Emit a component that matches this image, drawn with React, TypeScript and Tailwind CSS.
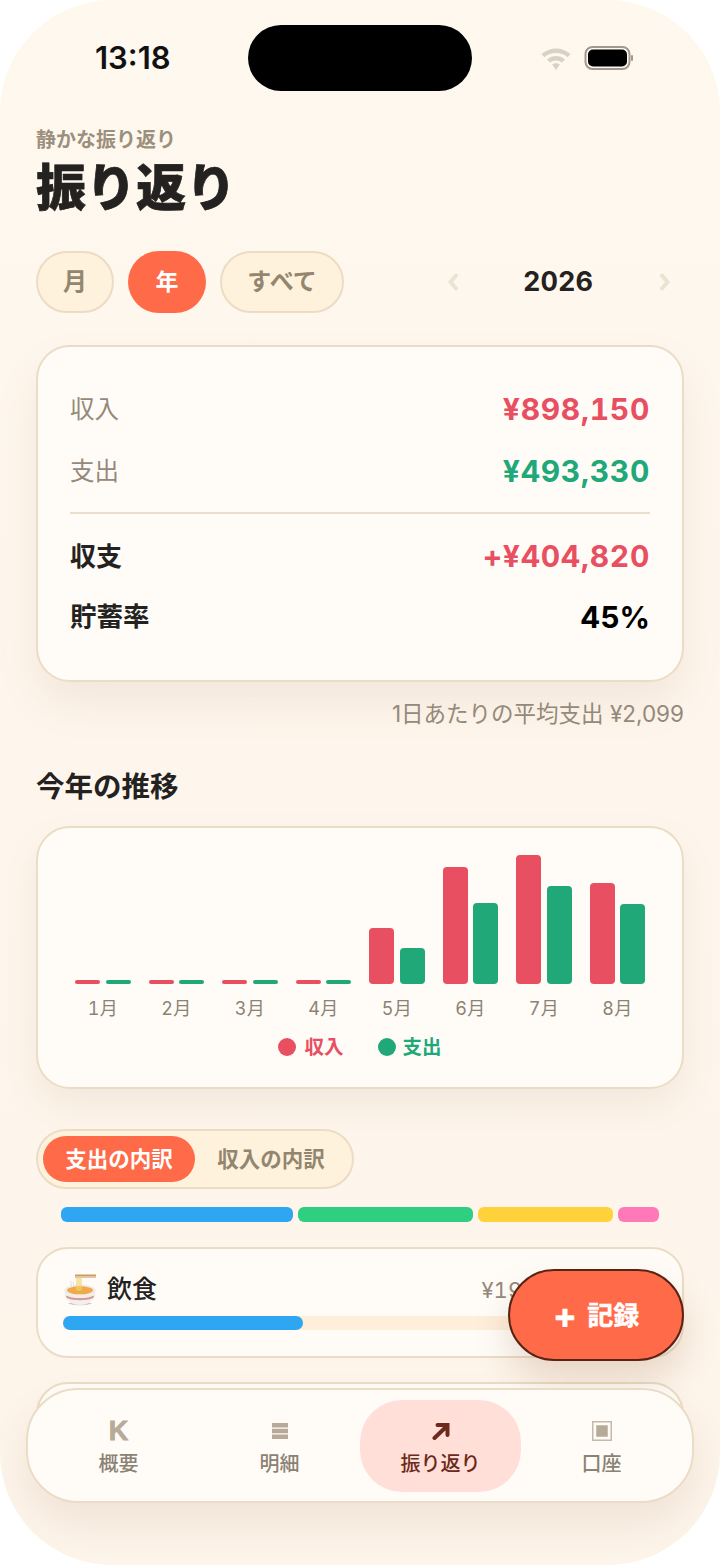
const months = [
  { label: '1月', income: 4, expense: 4 },
  { label: '2月', income: 4, expense: 4 },
  { label: '3月', income: 4, expense: 4 },
  { label: '4月', income: 4, expense: 4 },
  { label: '5月', income: 56, expense: 36 },
  { label: '6月', income: 117, expense: 81 },
  { label: '7月', income: 129, expense: 98 },
  { label: '8月', income: 101, expense: 80 },
];

function StatusBar() {
  return (
    <div className="relative h-[128px] shrink-0">
      <div className="absolute left-[95px] top-[41px] text-[31px] leading-[34px] font-semibold text-[#111111]">13:18</div>
      <div className="absolute left-[248px] top-[25px] w-[224px] h-[66px] rounded-[33px] bg-black" />
      <svg className="absolute left-[540px] top-[45px]" width="32" height="26" viewBox="0 0 32 26">
        <path d="M1.5 9C10 1.5 22 1.5 30.5 9l-2.8 3.2C21 6.6 11 6.6 4.3 12.2z" fill="#d8d1c4" />
        <path d="M7 14.4c5.2-4.6 12.8-4.6 18 0l-3 3.2c-3.4-2.9-8.6-2.9-12 0z" fill="#d8d1c4" />
        <path d="M12.2 19.6c2.2-1.8 5.4-1.8 7.6 0L16 25z" fill="#d8d1c4" />
      </svg>
      <svg className="absolute left-[584px] top-[45px]" width="50" height="26" viewBox="0 0 50 26">
        <rect x="1.5" y="2" width="44" height="22" rx="7" fill="none" stroke="#a09a8e" strokeWidth="2" />
        <rect x="4" y="4.5" width="39" height="17" rx="5" fill="#000000" />
        <rect x="47" y="10" width="2" height="6" rx="1" fill="#a09a8e" />
      </svg>
    </div>
  );
}

function Header() {
  return (
    <div className="px-9">
      <div className="text-[20px] leading-[24px] font-bold text-[#9c8f7c]">静かな振り返り</div>
      <div className="mt-[4px] text-[50px] leading-[64px] font-black text-[#242220] [-webkit-text-stroke:0.7px_#242220]">振り返り</div>
    </div>
  );
}

function PeriodRow() {
  return (
    <div className="mt-[31px] px-9 flex items-center justify-between">
      <div className="flex gap-[14px]">
        <div className="w-[78px] h-[62px] rounded-[31px] border-2 border-[#ecdcc4] bg-[#fef2dd] flex items-center justify-center text-[24px] font-bold text-[#93866f]">月</div>
        <div className="w-[78px] h-[62px] rounded-[31px] bg-[#ff6a48] flex items-center justify-center text-[23px] font-bold text-white">年</div>
        <div className="w-[124px] h-[62px] rounded-[31px] border-2 border-[#ecdcc4] bg-[#fef2dd] flex items-center justify-center text-[24px] font-bold text-[#93866f]">すべて</div>
      </div>
      <div className="flex items-center w-[250px] justify-between pl-[12px] pr-[12px]">
        <Chevron dir="left" />
        <div className="text-[27px] font-bold text-[#242220] tabular-nums mr-[2px]">2026</div>
        <Chevron dir="right" />
      </div>
    </div>
  );
}

function Chevron({ dir }: { dir: 'left' | 'right' }) {
  return (
    <svg width="14" height="20" viewBox="0 0 14 20">
      <path
        d={dir === 'left' ? 'M10 3.5L4.5 10l5.5 6.5' : 'M4 3.5L9.5 10 4 16.5'}
        fill="none"
        stroke="#ebe3d1"
        strokeWidth="4"
        strokeLinecap="round"
      />
    </svg>
  );
}

function SummaryCard() {
  return (
    <div className="mx-9 mt-[32px] h-[337px] rounded-[34px] border-2 border-[#ebdcc6] bg-[#fffcf8] shadow-[0_22px_44px_rgba(130,80,40,0.09)] px-[32px] pt-[31px]">
      <div className="flex items-center justify-between h-[62px]">
        <span className="text-[24.5px] text-[#94897a]">収入</span>
        <span className="text-[30px] font-bold text-[#e84f61] tabular-nums tracking-[0.7px]">¥898,150</span>
      </div>
      <div className="flex items-center justify-between h-[62px]">
        <span className="text-[24.5px] text-[#94897a]">支出</span>
        <span className="text-[30px] font-bold text-[#20a878] tabular-nums tracking-[0.7px]">¥493,330</span>
      </div>
      <div className="mt-[10px] h-[2px] bg-[#eadfcd]" />
      <div className="mt-[11px] flex items-center justify-between h-[62px]">
        <span className="text-[26px] font-bold text-[#242220]">収支</span>
        <span className="text-[30px] font-bold text-[#e84f61] tabular-nums tracking-[0.7px]">+¥404,820</span>
      </div>
      <div className="flex items-center justify-between h-[60px]">
        <span className="text-[26.5px] font-bold text-[#242220]">貯蓄率</span>
        <span className="text-[30px] font-bold text-black">45%</span>
      </div>
    </div>
  );
}

function TrendCard() {
  return (
    <div className="mx-9 mt-[18px] h-[263px] rounded-[34px] border-2 border-[#ebdcc6] bg-[#fffcf8] shadow-[0_16px_36px_rgba(130,80,40,0.08)] pt-[26px]">
      <div className="flex h-[130px] items-end pl-[37px]">
        {months.map((m) => (
          <div key={m.label} className="w-[73.5px] shrink-0 flex items-end gap-[5.5px]">
            <div className="w-[25px] rounded-[4px] bg-[#e84f61]" style={{ height: m.income }} />
            <div className="w-[25px] rounded-[4px] bg-[#20a878]" style={{ height: m.expense }} />
          </div>
        ))}
      </div>
      <div className="flex pl-[37px] mt-[13px]">
        {months.map((m) => (
          <div key={m.label} className="w-[73.5px] shrink-0 pr-[17.5px] text-center text-[18px] leading-[24px] text-[#8c8274] tabular-nums tracking-[0.3px]">{m.label}</div>
        ))}
      </div>
      <div className="mt-[14px] flex justify-center gap-[34px]">
        <div className="flex items-center gap-[8px]">
          <div className="w-[18px] h-[18px] rounded-full bg-[#e84f61]" />
          <span className="text-[19.5px] leading-[24px] font-bold text-[#e84f61]">収入</span>
        </div>
        <div className="flex items-center gap-[7px]">
          <div className="w-[18px] h-[18px] rounded-full bg-[#20a878]" />
          <span className="text-[19.5px] leading-[24px] font-bold text-[#20a878]">支出</span>
        </div>
      </div>
    </div>
  );
}

function Breakdown() {
  return (
    <>
      <div className="ml-9 mt-[40px] w-[318px] h-[60px] rounded-[30px] border-2 border-[#ecdcc4] bg-[#fef2dd] flex items-center pl-[5px]">
        <div className="w-[152px] h-[46px] rounded-[23px] bg-[#ff6a48] flex items-center justify-center text-[21.5px] font-bold text-white">支出の内訳</div>
        <div className="w-[152px] flex items-center justify-center text-[21.5px] font-bold text-[#93866f]">収入の内訳</div>
      </div>
      <div className="mx-[61px] mt-[18px] flex gap-[5px] h-[15px]">
        <div className="w-[232px] rounded-[6px] bg-[#2fa6f2]" />
        <div className="w-[175px] rounded-[6px] bg-[#2ecf80]" />
        <div className="w-[135px] rounded-[6px] bg-[#ffd23c]" />
        <div className="w-[41px] rounded-[6px] bg-[#ff78b8]" />
      </div>
      <div className="mx-9 mt-[25px] h-[111px] rounded-[32px] border-2 border-[#ebdcc6] bg-[#fffcf8] px-[25px] pt-[20px]">
        <div className="flex items-center justify-between h-[42px]">
          <div className="flex items-center gap-[10px]">
            <RamenIcon />
            <span className="text-[25px] font-medium text-[#242220]">飲食</span>
          </div>
          <span className="text-[22px] text-[#94897a] mr-[2px] tabular-nums">¥199,330 / 40%</span>
        </div>
        <div className="mt-[5px] h-[14px] rounded-[5px] bg-[#feeeda] overflow-hidden">
          <div className="w-[240px] h-full rounded-[7px] bg-[#2fa6f2]" />
        </div>
      </div>
      <div className="mx-9 mt-[24px] h-[110px] rounded-[32px] border-2 border-[#ebdcc6] bg-[#fffcf8]" />
    </>
  );
}

function RamenIcon() {
  return (
    <svg width="34" height="34" viewBox="0 0 34 34">
      <path d="M5 30c3 3 21 3 24 0z" fill="#c9c6c2" />
      <path d="M1.5 17h31c0 9-6 15-15.5 15S1.5 26 1.5 17z" fill="#f2eeea" />
      <path d="M2.6 22.5c7 3.4 21.8 3.4 28.8 0l-1 2.6c-7 3-19.8 3-26.8 0z" fill="#d99a9a" />
      <ellipse cx="17" cy="17" rx="15.5" ry="5.4" fill="#f1ece6" />
      <ellipse cx="17" cy="17.3" rx="13" ry="4" fill="#f0a94b" />
      <rect x="12" y="1.5" width="21" height="2" fill="#c99a6a" />
      <rect x="12" y="3.5" width="21" height="1.4" fill="#e2c096" />
      <path d="M14 5v12.5M16 5v13M18 5v12.5" stroke="#f3d56c" strokeWidth="1.2" />
      <path d="M8 8c-1 2 1 3 0 5M10.5 9c-1 2 1 3 0 5" stroke="#dfdcd6" strokeWidth="1" fill="none" />
    </svg>
  );
}

function TabBar() {
  return (
    <div className="absolute left-[26px] top-[1388px] w-[668px] h-[115px] rounded-[52px] border-2 border-[#ebdcc6] bg-[#fffcf8] shadow-[0_20px_40px_rgba(130,80,40,0.1)] grid grid-cols-4 items-center px-[10px]">
      <TabItem label="概要" icon={<span className="font-['Liberation_Sans',sans-serif] text-[27px] leading-[28px] font-bold text-[#b7aa99] [-webkit-text-stroke:0.8px_#b7aa99]">K</span>} />
      <TabItem
        label="明細"
        icon={
          <svg width="16" height="16" viewBox="0 0 16 16">
            <rect width="16" height="4.5" fill="#b7aa99" />
            <rect y="5.75" width="16" height="4.5" fill="#b7aa99" />
            <rect y="11.5" width="16" height="4.5" fill="#b7aa99" />
          </svg>
        }
      />
      <TabItem
        active
        label="振り返り"
        icon={
          <svg width="18" height="18" viewBox="0 0 18 18">
            <path d="M2.5 16L14.5 4.5M5.5 3H15.5V13" fill="none" stroke="#6b2a1c" strokeWidth="4" strokeLinecap="round" />
          </svg>
        }
      />
      <TabItem
        label="口座"
        icon={
          <svg width="20" height="20" viewBox="0 0 20 20">
            <rect x="0.75" y="0.75" width="18.5" height="18.5" fill="none" stroke="#c4b9a9" strokeWidth="1.5" />
            <rect x="4.25" y="4.25" width="11.5" height="11.5" fill="#b7aa99" />
          </svg>
        }
      />
    </div>
  );
}

function TabItem({ label, icon, active }: { label: string; icon: React.ReactNode; active?: boolean }) {
  return (
    <div
      className={`h-[92px] rounded-[42px] flex flex-col items-center pt-[17px] ${active ? 'bg-[#ffdfd7]' : ''}`}
    >
      <div className="h-[28px] flex items-center justify-center">{icon}</div>
      <div className={`mt-[5px] text-[20px] leading-[28px] font-medium ${active ? 'text-[#6b2a1c]' : 'text-[#8c8274]'}`}>{label}</div>
    </div>
  );
}

export default function App() {
  return (
    <div className="w-[720px] h-[1565px] bg-white font-['Inter','Noto_Sans_CJK_JP',sans-serif]">
      <div className="relative w-full h-full rounded-[112px] overflow-hidden bg-gradient-to-b from-[#fff8ef] to-[#fdf4ea] flex flex-col">
        <StatusBar />
        <Header />
        <PeriodRow />
        <SummaryCard />
        <div className="mx-9 mt-[16px] text-right text-[22.5px] leading-[32px] text-[#94897a]">1日あたりの平均支出 ¥2,099</div>
        <div className="ml-9 mt-[36px] text-[28.5px] leading-[42px] font-semibold text-[#242220]">今年の推移</div>
        <TrendCard />
        <Breakdown />
        <div className="absolute left-[508px] top-[1269px] w-[176px] h-[92px] rounded-[46px] border-2 border-[#5a2415] bg-[#ff6a48] shadow-[0_18px_36px_rgba(130,70,30,0.18)] flex items-center justify-center gap-[10px] text-[26px] font-bold text-white [-webkit-text-stroke:0.4px_#ffffff]">
          <span className="text-[36px] leading-[36px] font-bold">+</span>
          <span>記録</span>
        </div>
        <TabBar />
      </div>
    </div>
  );
}
